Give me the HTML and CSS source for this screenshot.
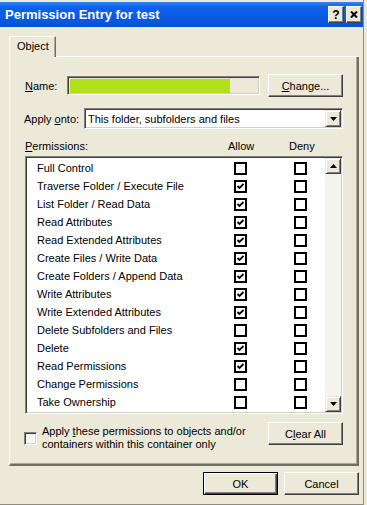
FILE: index.html
```html
<!DOCTYPE html>
<html lang="en">
<head>
    <meta charset="UTF-8">
    <meta name="viewport" content="width=device-width, initial-scale=1.0">
    <title>Permission Entry for test</title>
    <link rel="stylesheet" href="styles.css">
</head>
<body>
    <div class="window">
        <div class="titlebar">
            <span class="title">Permission Entry for test</span>
            <span class="caption-btn">?</span>
            <span class="caption-btn">
                <svg width="8" height="7" viewBox="0 0 8 7"><path d="M1 0.5 L7 6.5 M7 0.5 L1 6.5" stroke="#000" stroke-width="2"/></svg>
            </span>
        </div>
        <div class="client">
            <div class="tabs">
                <div class="tab">Object</div>
                <div class="tab-fill"></div>
            </div>
            <div class="panel">
                <div class="name-row">
                    <label class="name-lbl"><u>N</u>ame:</label>
                    <div class="name-field"><div class="name-fill"></div></div>
                    <button class="btn push-right"><u>C</u>hange...</button>
                </div>
                <div class="apply-row">
                    <label class="apply-lbl">Apply <u>o</u>nto:</label>
                    <div class="combo">
                        <span class="combo-text">This folder, subfolders and files</span>
                        <span class="arrow-btn">
                            <svg width="7" height="4" viewBox="0 0 7 4"><polygon points="0,0 7,0 3.5,4" fill="#000"/></svg>
                        </span>
                    </div>
                </div>
                <div class="perm-head">
                    <span class="perm-lbl"><u>P</u>ermissions:</span>
                    <span class="col-allow">Allow</span>
                    <span>Deny</span>
                </div>
                <div class="listbox">
                    <div class="list-rows" id="rows"></div>
                    <div class="scrollbar">
                        <span class="arrow-btn">
                            <svg width="7" height="4" viewBox="0 0 7 4"><polygon points="0,4 7,4 3.5,0" fill="#000"/></svg>
                        </span>
                        <div class="sb-track"></div>
                        <span class="arrow-btn">
                            <svg width="7" height="4" viewBox="0 0 7 4"><polygon points="0,0 7,0 3.5,4" fill="#000"/></svg>
                        </span>
                    </div>
                </div>
                <div class="bottom-row">
                    <span class="cb3d"></span>
                    <span class="apply-text">Apply <u>t</u>hese permissions to objects and/or<br>containers within this container only</span>
                    <button class="btn push-right">C<u>l</u>ear All</button>
                </div>
            </div>
            <div class="dlg-buttons">
                <button class="btn default">OK</button>
                <button class="btn">Cancel</button>
            </div>
        </div>
    </div>
    <script>
        const perms = [
            ['Full Control', false],
            ['Traverse Folder / Execute File', true],
            ['List Folder / Read Data', true],
            ['Read Attributes', true],
            ['Read Extended Attributes', true],
            ['Create Files / Write Data', true],
            ['Create Folders / Append Data', true],
            ['Write Attributes', true],
            ['Write Extended Attributes', true],
            ['Delete Subfolders and Files', false],
            ['Delete', true],
            ['Read Permissions', true],
            ['Change Permissions', false],
            ['Take Ownership', false]
        ];
        const check = '<svg width="9" height="9" viewBox="0 0 9 9"><path d="M1.5 4 L3.5 6 L7.5 2" fill="none" stroke="#000" stroke-width="1.8"/></svg>';
        const rows = document.getElementById('rows');
        perms.forEach(([name, allow]) => {
            const row = document.createElement('div');
            row.className = 'perm-row';
            row.innerHTML = '<span class="perm-name">' + name + '</span>' +
                '<span class="cb">' + (allow ? check : '') + '</span>' +
                '<span class="cb deny"></span>';
            rows.appendChild(row);
        });
    </script>
</body>
</html>
```

FILE: styles.css
```css
/* General */
* {
    box-sizing: border-box;
}

body {
    margin: 0;
    background-color: #ece9d8;
    font-family: 'Liberation Sans', Arial, sans-serif;
    font-size: 11px;
    color: #000;
}

.window {
    width: 364px;
    height: 505px;
    padding-top: 2px;
    border-right: 1px solid #8e8c80;
    border-bottom: 1px solid #8e8c80;
    display: flex;
    flex-direction: column;
}

/* Title bar */
.titlebar {
    height: 25px;
    display: flex;
    align-items: center;
    padding: 0 1px 0 5px;
    background: linear-gradient(#3a82f6, #0f60e8 20%, #0b59e3 70%, #0650d6);
    color: #fff;
}

.title {
    flex: 1;
    font-weight: bold;
    font-size: 13px;
}

.caption-btn {
    width: 16px;
    height: 17px;
    margin-left: 2px;
    display: flex;
    align-items: center;
    justify-content: center;
    background-color: #ece9d8;
    border: 1px solid;
    border-color: #fff #404040 #404040 #fff;
    box-shadow: inset -1px -1px #808080;
    color: #000;
    font-weight: bold;
    font-size: 12px;
}

/* Client area */
.client {
    flex: 1;
    padding: 9px 4px 0 9px;
    display: flex;
    flex-direction: column;
}

.tabs {
    display: flex;
    height: 21px;
}

.tab {
    width: 47px;
    padding: 3px 0 0 7px;
    border-top: 1px solid #fff;
    border-left: 1px solid #fff;
    border-right: 1px solid #716f64;
    box-shadow: inset -1px 0 #aca899;
}

.tab-fill {
    flex: 1;
    border-bottom: 1px solid #fff;
}

.panel {
    border-left: 1px solid #fff;
    border-right: 2px solid #716f64;
    border-bottom: 2px solid #716f64;
    box-shadow: inset -1px -1px #aca899;
    padding: 17px 14px 13px 15px;
}

u {
    text-decoration: underline;
    text-underline-offset: 1px;
}

/* Buttons */
.btn {
    width: 75px;
    height: 23px;
    padding: 0;
    background-color: #ece9d8;
    border: 1px solid;
    border-color: #fff #404040 #404040 #fff;
    box-shadow: inset -1px -1px #808080;
    font-family: inherit;
    font-size: 11px;
    color: #000;
}

.btn.default {
    border: 1px solid #000;
    box-shadow: inset 1px 1px #fff, inset -1px -1px #404040, inset -2px -2px #808080;
}

.push-right {
    margin-left: auto;
}

.arrow-btn {
    width: 16px;
    height: 16px;
    display: flex;
    align-items: center;
    justify-content: center;
    background-color: #ece9d8;
    border: 1px solid;
    border-color: #ece9d8 #404040 #404040 #ece9d8;
    box-shadow: inset 1px 1px #fff, inset -1px -1px #808080;
}

/* Name / Apply onto */
.name-row {
    display: flex;
    align-items: center;
    height: 23px;
}

.name-lbl {
    width: 42px;
}

.name-field {
    width: 193px;
    height: 19px;
    padding: 1px;
    border: 1px solid;
    border-color: #808080 #fff #fff #808080;
    box-shadow: inset 1px 1px #404040, inset -1px -1px #d4d0c8;
}

.name-fill {
    margin: 1px 0 0 1px;
    width: 160px;
    height: 14px;
    background-color: #b4df1c;
}

.apply-row {
    display: flex;
    align-items: center;
    margin-top: 11px;
    height: 21px;
}

.apply-lbl {
    width: 60px;
    margin-left: -1px;
}

.combo {
    flex: 1;
    height: 21px;
    display: flex;
    align-items: center;
    background-color: #fff;
    border: 1px solid;
    border-color: #808080 #fff #fff #808080;
    box-shadow: inset 1px 1px #404040, inset -1px -1px #d4d0c8;
    padding: 1px;
}

.combo-text {
    flex: 1;
    padding-left: 2px;
}

.combo .arrow-btn {
    height: 17px;
}

/* Permissions list */
.perm-head {
    display: flex;
    margin-top: 11px;
    height: 13px;
    line-height: 13px;
}

.perm-lbl {
    width: 203px;
}

.col-allow {
    width: 61px;
}

.listbox {
    margin-top: 3px;
    height: 258px;
    display: flex;
    background-color: #fff;
    border: 1px solid;
    border-color: #808080 #fff #fff #808080;
    box-shadow: inset 1px 1px #404040, inset -1px -1px #d4d0c8;
    padding: 1px;
}

.list-rows {
    flex: 1;
    padding: 1px 0 0 10px;
}

.perm-row {
    height: 18px;
    display: flex;
    align-items: center;
}

.perm-name {
    width: 197px;
}

.cb {
    width: 13px;
    height: 13px;
    border: 2px solid #000;
    background-color: #fff;
    display: flex;
}

.cb.deny {
    margin-left: 47px;
}

.scrollbar {
    width: 16px;
    display: flex;
    flex-direction: column;
}

.sb-track {
    flex: 1;
    background-color: #f4f3ee;
}

/* Bottom */
.bottom-row {
    display: flex;
    align-items: flex-start;
    margin-top: 8px;
}

.cb3d {
    width: 13px;
    height: 13px;
    margin: 10px 0 0 -1px;
    background-color: #f7f6f1;
    border: 1px solid;
    border-color: #808080 #fff #fff #808080;
    box-shadow: inset 1px 1px #404040, inset -1px -1px #d4d0c8;
}

.apply-text {
    margin: 3px 0 0 5px;
    line-height: 13px;
}

.dlg-buttons {
    display: flex;
    justify-content: flex-end;
    gap: 6px;
    margin-top: 6px;
}
```
